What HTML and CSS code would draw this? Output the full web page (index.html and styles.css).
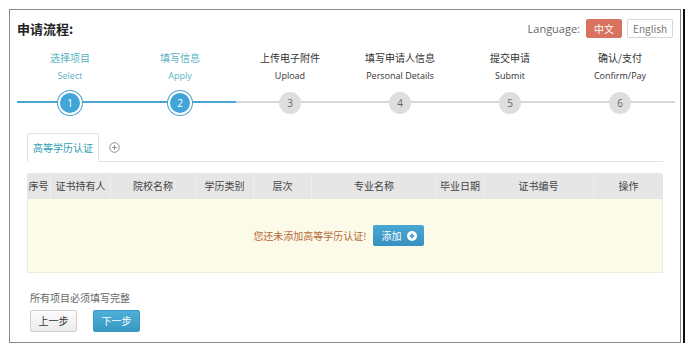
FILE: index.html
```html
<!DOCTYPE html>
<html lang="zh">
<head>
    <meta charset="UTF-8">
    <title>申请流程</title>
    <link rel="stylesheet" href="styles.css">
</head>
<body>

<div class="panel">
    <div class="header">
        <h1>申请流程:</h1>
        <div class="lang">
            <span class="lang-label">Language:</span>
            <span class="lang-btn active">中文</span>
            <span class="lang-btn">English</span>
        </div>
    </div>

    <div class="steps">
        <div class="track"><div class="track-done"></div></div>
        <div class="step done">
            <div class="step-cn">选择项目</div>
            <div class="step-en">Select</div>
            <div class="dot">1</div>
        </div>
        <div class="step done">
            <div class="step-cn">填写信息</div>
            <div class="step-en">Apply</div>
            <div class="dot">2</div>
        </div>
        <div class="step">
            <div class="step-cn">上传电子附件</div>
            <div class="step-en">Upload</div>
            <div class="dot">3</div>
        </div>
        <div class="step">
            <div class="step-cn">填写申请人信息</div>
            <div class="step-en">Personal Details</div>
            <div class="dot">4</div>
        </div>
        <div class="step">
            <div class="step-cn">提交申请</div>
            <div class="step-en">Submit</div>
            <div class="dot">5</div>
        </div>
        <div class="step">
            <div class="step-cn">确认/支付</div>
            <div class="step-en">Confirm/Pay</div>
            <div class="dot">6</div>
        </div>
    </div>

    <div class="section">
        <div class="tabs">
            <div class="tab">高等学历认证</div>
            <div class="tab-add">
                <svg width="11" height="11" viewBox="0 0 12 12">
                    <circle cx="6" cy="6" r="5.2" fill="none" stroke="#777" stroke-width="0.9"/>
                    <path d="M6 3.4v5.2M3.4 6h5.2" stroke="#777" stroke-width="0.9"/>
                </svg>
            </div>
        </div>

        <div class="table">
            <div class="thead">
                <div class="th c1">序号</div>
                <div class="th c2">证书持有人</div>
                <div class="th c3">院校名称</div>
                <div class="th c4">学历类别</div>
                <div class="th c5">层次</div>
                <div class="th c6">专业名称</div>
                <div class="th c7">毕业日期</div>
                <div class="th c8">证书编号</div>
                <div class="th c9">操作</div>
            </div>
            <div class="tbody">
                <span class="empty-msg">您还未添加高等学历认证!</span>
                <span class="btn-add">添加
                    <svg width="10" height="10" viewBox="0 0 10 10">
                        <circle cx="5" cy="5" r="5" fill="#fff"/>
                        <path d="M5 2.6v4.8M2.6 5h4.8" stroke="#3b98c6" stroke-width="1.5"/>
                    </svg>
                </span>
            </div>
        </div>
    </div>

    <div class="footer">
        <p class="note">所有项目必须填写完整</p>
        <div class="actions">
            <span class="btn btn-prev">上一步</span>
            <span class="btn btn-next">下一步</span>
        </div>
    </div>
</div>

</body>
</html>
```

FILE: styles.css
```css
body {
    margin: 0;
    background-color: #ffffff;
    font-family: "Open Sans", "Noto Sans CJK SC", sans-serif;
    color: #333;
}

.panel {
    margin: 9px 0 0 9px;
    width: 670px;
    height: 332px;
    border: 1px solid #8a8a8a;
    box-shadow: 2px 0 0 #fff, 4px 0 0 #111;
}

.header {
    display: flex;
    justify-content: space-between;
    align-items: center;
    padding: 9px 7px 0 7px;
    height: 19px;
}

h1 {
    margin: 0;
    font-family: "Noto Sans CJK SC", sans-serif;
    font-size: 13px;
    font-weight: bold;
    color: #222;
}

.lang {
    display: flex;
    align-items: center;
    font-size: 11px;
}

.lang-label {
    color: #666;
    margin-right: 1px;
}

.lang-btn {
    display: inline-block;
    height: 17px;
    line-height: 17px;
    padding: 0 5px;
    border: 1px solid #d6d6d6;
    border-radius: 2px;
    color: #777;
    margin-left: 5px;
    font-family: "Noto Sans CJK SC", sans-serif;
    font-size: 10px;
}

.lang-btn.active {
    background-color: #d9735f;
    border-color: #d9735f;
    color: #fff;
    padding: 0 7px;
}

.steps {
    position: relative;
    display: flex;
    margin: 13px 0 0 5px;
    width: 660px;
}

.track {
    position: absolute;
    left: 2px;
    right: 0;
    top: 50px;
    height: 2px;
    background-color: #d8d8d8;
}

.track-done {
    width: 219px;
    height: 2px;
    background-color: #4aa3d1;
}

.step {
    position: relative;
    flex: 1;
    text-align: center;
}

.step-cn {
    font-family: "Noto Sans CJK SC", sans-serif;
    font-size: 10px;
    line-height: 14px;
    color: #333;
}

.step-en {
    font-size: 9px;
    line-height: 14px;
    margin-top: 4px;
    color: #333;
}

.step.done .step-cn,
.step.done .step-en {
    color: #5ab3c3;
}

.dot {
    width: 22px;
    height: 22px;
    line-height: 22px;
    margin: 9px auto 0;
    border-radius: 50%;
    background-color: #dedede;
    color: #666;
    font-size: 10px;
}

.step.done .dot {
    width: 20px;
    height: 20px;
    line-height: 20px;
    background-color: #42a5d8;
    color: #fff;
    border: 2px solid #fff;
    box-shadow: 0 0 0 1px #4aa3d1;
    margin-top: 8px;
}

.section {
    margin: 18px 17px 0 17px;
}

.tabs {
    display: flex;
    align-items: center;
    border-bottom: 1px solid #e2e2e2;
    height: 28px;
}

.tab {
    align-self: flex-end;
    height: 27px;
    line-height: 27px;
    padding: 0 5px;
    border: 1px solid #e2e2e2;
    border-bottom: 1px solid #fff;
    border-radius: 3px 3px 0 0;
    margin-bottom: -1px;
    font-family: "Noto Sans CJK SC", sans-serif;
    font-size: 10px;
    color: #2e9db0;
    background-color: #fff;
}

.tab-add {
    margin-left: 10px;
}

.tab-add svg {
    display: block;
}

.table {
    margin-top: 11px;
}

.thead {
    display: flex;
    height: 26px;
    background-color: #e6e6e6;
    border-radius: 3px 3px 0 0;
}

.th {
    border-right: 1px solid #efefef;
    text-align: center;
    line-height: 26px;
    font-family: "Noto Sans CJK SC", sans-serif;
    font-size: 10px;
    color: #444;
}

.c1 { width: 23px; }
.c2 { width: 59px; }
.c3 { width: 84px; }
.c4 { width: 57px; }
.c5 { width: 57px; }
.c6 { width: 124px; }
.c7 { width: 46px; }
.c8 { width: 109px; }
.c9 { flex: 1; border-right: none; }

.tbody {
    display: flex;
    justify-content: center;
    align-items: center;
    height: 73px;
    background-color: #fcfbe9;
    border: 1px solid #ececdc;
    border-top: none;
    padding-right: 13px;
}

.empty-msg {
    font-family: "Noto Sans CJK SC", sans-serif;
    font-size: 10px;
    color: #b8693a;
    margin-right: 6px;
}

.btn-add {
    display: inline-flex;
    align-items: center;
    gap: 5px;
    height: 21px;
    padding: 0 7px 0 9px;
    border-radius: 2px;
    background: linear-gradient(#4aa9d4, #3690bf);
    color: #fff;
    font-family: "Noto Sans CJK SC", sans-serif;
    font-size: 10px;
}

.footer {
    margin: 18px 0 0 20px;
}

.note {
    margin: 0;
    font-family: "Noto Sans CJK SC", sans-serif;
    font-size: 10px;
    color: #666;
    line-height: 14px;
}

.actions {
    display: flex;
    gap: 16px;
    margin-top: 5px;
}

.btn {
    display: inline-block;
    width: 45px;
    height: 20px;
    line-height: 20px;
    text-align: center;
    border-radius: 2px;
    font-family: "Noto Sans CJK SC", sans-serif;
    font-size: 10px;
}

.btn-prev {
    background: linear-gradient(#fbfbfb, #ececec);
    border: 1px solid #cfcfcf;
    color: #333;
}

.btn-next {
    background: linear-gradient(#4eb0d6, #3a98c4);
    border: 1px solid #3a98c4;
    color: #fff;
}
```
